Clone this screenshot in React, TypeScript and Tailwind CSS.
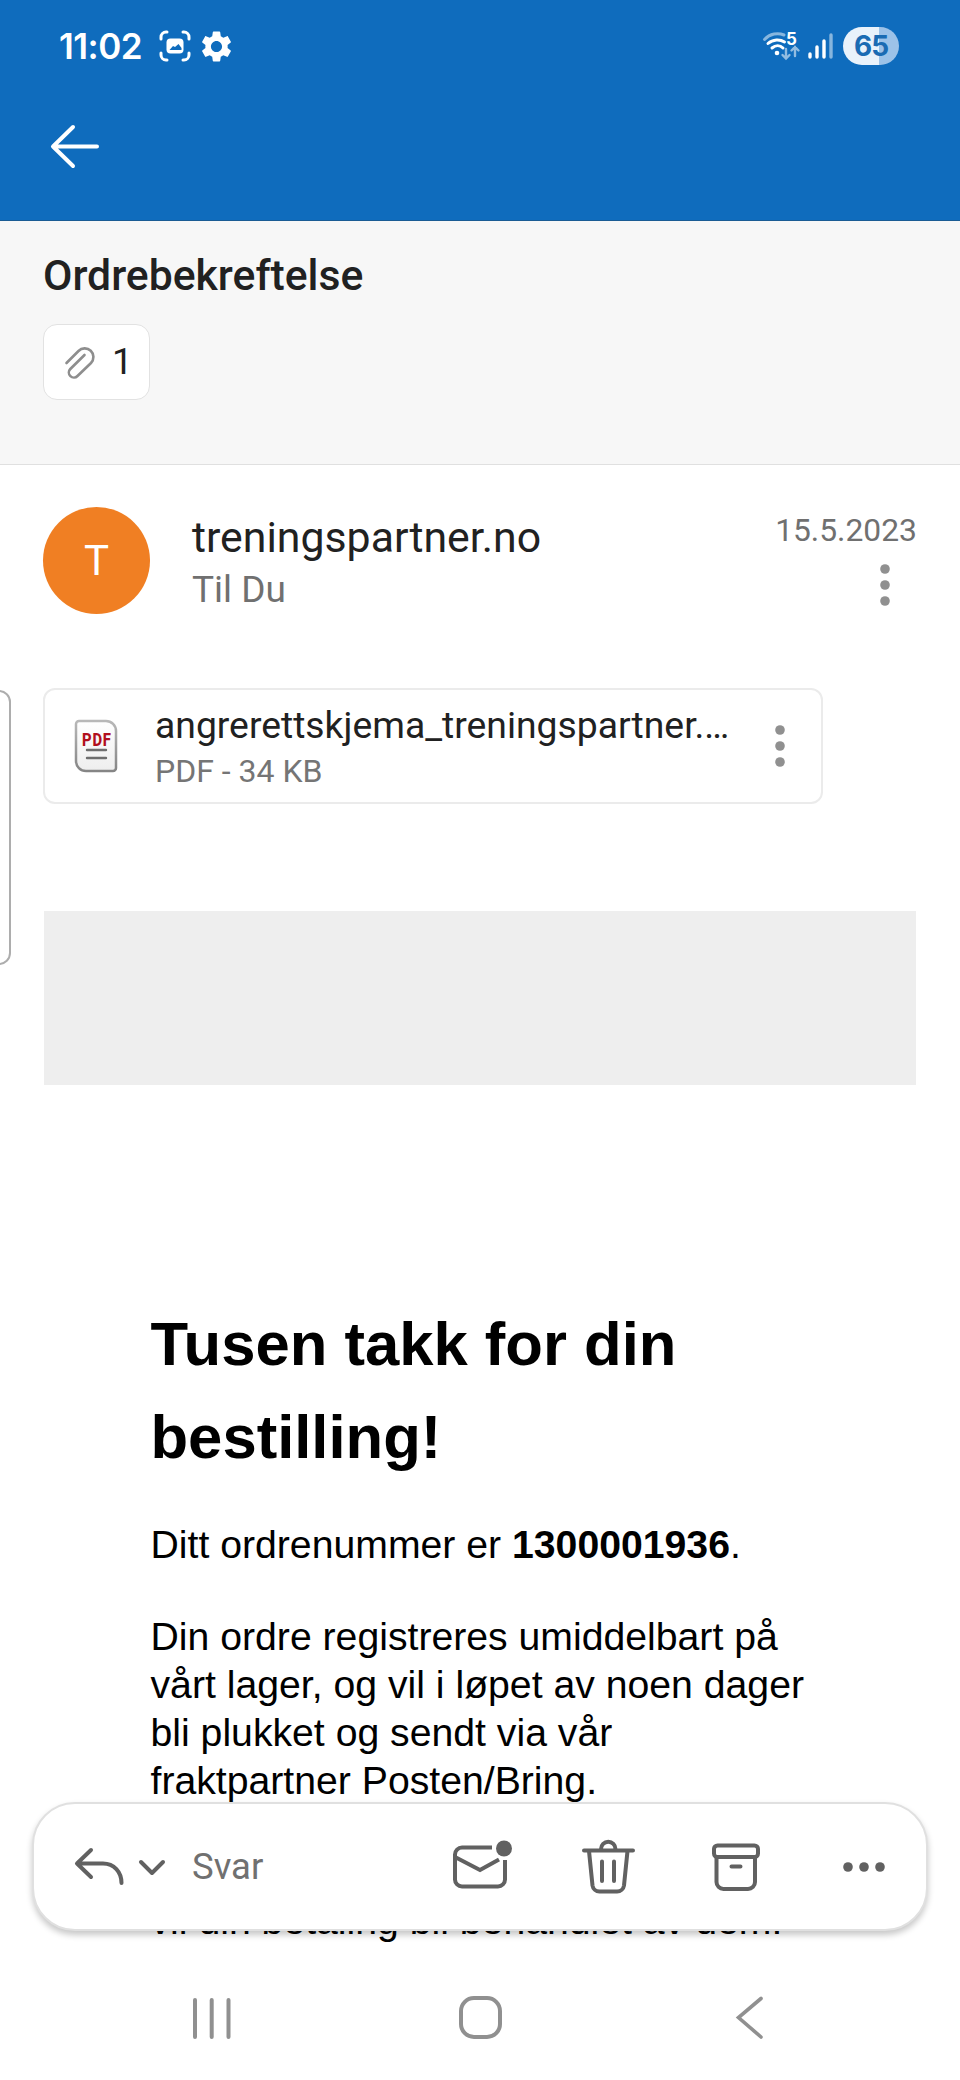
interface DotsProps {
    className?: string;
}

const VerticalDots = ({ className }: DotsProps) => (
    <svg className={className} width="12" height="44" viewBox="0 0 12 44" fill="#909090">
        <circle cx="6" cy="6" r="4.8" />
        <circle cx="6" cy="22" r="4.8" />
        <circle cx="6" cy="38" r="4.8" />
    </svg>
);

const StatusBar = () => (
    <div className="flex h-[92px] items-center justify-between pr-[61px] pl-[59px] text-white">
        <div className="flex items-center">
            <span className="w-[100px] font-['Inter'] text-[35px] leading-[40px] font-semibold tracking-[-0.5px]">11:02</span>
            {/* smart capture */}
            <svg width="32" height="32" viewBox="0 0 32 32" fill="none" stroke="currentColor" strokeWidth="3" strokeLinecap="round">
                <path d="M2 9V7a5 5 0 0 1 5-5h1M24 2h1a5 5 0 0 1 5 5v2M30 23v2a5 5 0 0 1-5 5h-1M8 30H7a5 5 0 0 1-5-5v-2" />
                <rect x="7.5" y="8.5" width="17" height="15" rx="4" fill="currentColor" stroke="none" />
                <path d="M10.500 20l3.500-4 2 1 3.500-3 3 4v2z" fill="#0f6cbd" stroke="none" />
            </svg>
            <svg className="ml-[10px]" width="31" height="31" viewBox="2 2 20 20" fill="currentColor">
                <path d="M19.140 12.940c.04-.3.060-.61.060-.94 0-.32-.02-.64-.07-.94l2.030-1.580c.18-.14.230-.41.120-.61l-1.920-3.320c-.12-.22-.37-.29-.59-.22l-2.390.96c-.5-.38-1.030-.7-1.620-.94l-.36-2.540c-.04-.24-.24-.41-.48-.41h-3.840c-.24 0-.43.17-.47.410l-.36 2.540c-.59.240-1.130.57-1.620.94l-2.390-.96c-.22-.08-.47 0-.59.220L2.740 8.870c-.12.210-.08.470.120.610l2.030 1.580c-.05.3-.09.630-.09.940s.02.640.070.940l-2.030 1.580c-.18.140-.23.410-.12.610l1.920 3.320c.12.220.370.290.590.220l2.390-.96c.5.380 1.030.7 1.620.940l.36 2.540c.05.240.240.410.480.410h3.840c.24 0 .44-.17.470-.41l.36-2.540c.59-.24 1.130-.56 1.620-.94l2.390.96c.22.080.470 0 .59-.22l1.920-3.320c.12-.22.070-.47-.12-.61l-2.010-1.580zM12 15.600c-1.980 0-3.600-1.620-3.600-3.600s1.620-3.600 3.600-3.600 3.600 1.620 3.600 3.600-1.620 3.600-3.600 3.600z" />
            </svg>
        </div>
        <div className="flex items-center">
            {/* wifi with band number and traffic arrows */}
            <div className="relative">
                <svg width="39" height="30" viewBox="0 0 39 30" fill="none" stroke="currentColor" strokeWidth="3" strokeLinecap="round">
                    <path d="M2.500 8.500C8 2.500 16 1.500 22 4" opacity=".5" />
                    <path d="M6 12.500c5-4.500 12-4.500 16.500-1.500M10 17c3.500-3 8-3 11 0" />
                    <circle cx="15" cy="22" r="2.300" fill="currentColor" stroke="none" />
                    <path d="M24 18v9m-3.500-3 3.500 3.500 3.500-3.500M33 25v-9m-3.500 3.500L33 16l3.500 3.500" strokeWidth="2.400" opacity=".55" />
                </svg>
                <span className="absolute top-0 left-[24px] font-['Inter'] text-[17px] leading-[17px] font-bold">5</span>
            </div>
            <svg className="ml-[7px]" width="25" height="28" viewBox="0 0 25 28" stroke="currentColor" strokeWidth="3.400" strokeLinecap="round">
                <path d="M2 25v-3M9 25V15M16 25V9" />
                <path d="M23 25V3" opacity=".5" />
            </svg>
            <div className="ml-[10px] flex h-[38px] w-[56px] items-center justify-center rounded-full bg-linear-to-r from-[#e9f2fb] from-64% to-[#9cc2e8] to-64%">
                <span className="font-['Inter'] text-[28px] leading-[38px] font-bold tracking-[-1px] text-[#1a6bb3]">65</span>
            </div>
        </div>
    </div>
);

const Header = () => (
    <header className="h-[221px] border-b border-[#1a5c94] bg-[#0f6cbd]">
        <StatusBar />
        <svg className="mt-[32px] ml-[50px]" width="50" height="46" viewBox="0 0 50 46" fill="none" stroke="#fff" strokeWidth="4" strokeLinecap="round" strokeLinejoin="round">
            <path d="M23 3 3 22.500 23 42M3.500 22.500h43.500" />
        </svg>
    </header>
);

const Subject = () => (
    <section className="h-[244px] border-b border-[#e0e0e0] bg-[#f7f7f7] pt-[27px] pl-[43px]">
        <h1 className="text-[42.7px] leading-[55px] font-medium text-[#212121]">Ordrebekreftelse</h1>
        <div className="mt-[21px] flex h-[76px] w-[107px] items-center rounded-[14px] border border-[#e2e2e2] bg-white pl-[20px]">
            <svg width="32" height="34" viewBox="0 0 32 34" fill="none" stroke="#8e8e8e" strokeWidth="2.600" strokeLinecap="round">
                <path d="M2.500 18 14.500 6a8.600 8.600 0 0 1 12.500 12L13.500 31a5 5 0 0 1-7.200-7L20.500 10" />
            </svg>
            <span className="ml-[16px] text-[37px] leading-[48px] text-[#212121]">1</span>
        </div>
    </section>
);

const Sender = () => (
    <section className="flex h-[223px] pt-[42px] pr-[43px] pl-[43px]">
        <div className="flex size-[107px] items-center justify-center rounded-full bg-[#f07f23] text-[42px] text-white">T</div>
        <div className="mt-[4px] ml-[42px] flex-1">
            <p className="text-[42.8px] leading-[52px] text-[#212121]">treningspartner.no</p>
            <p className="text-[37px] leading-[54px] text-[#707070]">Til Du</p>
        </div>
        <div className="mt-[3px] flex flex-col items-end">
            <p className="text-[31.8px] leading-[40px] text-[#707070]">15.5.2023</p>
            <VerticalDots className="mt-[13px] mr-[26px]" />
        </div>
    </section>
);

const Attachment = () => (
    <div className="ml-[43px] flex h-[116px] w-[780px] rounded-[12px] border-2 border-[#ebebeb] pl-[29px]">
        <div className="relative mt-[29px] h-[54px] w-[44px]">
            <svg width="44" height="54" viewBox="0 0 44 54" fill="none">
                <defs>
                    <linearGradient id="sheet" x1="0" y1="0" x2="0" y2="1">
                        <stop offset="0" stopColor="#fff" />
                        <stop offset="1" stopColor="#eee" />
                    </linearGradient>
                    <linearGradient id="edge" x1="0" y1="0" x2="0" y2="1">
                        <stop offset="0" stopColor="#b8b8b8" />
                        <stop offset="1" stopColor="#858585" />
                    </linearGradient>
                </defs>
                <path d="M5 2h27a10 10 0 0 1 10 10v37a3 3 0 0 1-3 3H12A10 10 0 0 1 2 42V5a3 3 0 0 1 3-3z" fill="url(#sheet)" stroke="url(#edge)" strokeWidth="2.500" />
                <path d="M13 31h19M13 39h19" stroke="#6e6e6e" strokeWidth="2.400" strokeLinecap="round" />
            </svg>
            <span className="absolute top-[11px] left-[8px] origin-left scale-x-[0.78] text-[19px] leading-[20px] font-extrabold tracking-[1px] text-[#b10e1c]">PDF</span>
        </div>
        <div className="mt-[11px] ml-[37px] w-[590px]">
            <p className="text-[37.3px] leading-[48px] whitespace-nowrap text-[#212121]">angrerettskjema_treningspartner.…</p>
            <p className="text-[32px] leading-[45px] text-[#757575]">PDF - 34 KB</p>
        </div>
        <VerticalDots className="mt-[34px] ml-[29px]" />
    </div>
);

const MailBody = () => (
    <article className="pr-[140px] pl-[150.5px] font-['Liberation_Sans',sans-serif] text-[39.2px] leading-[48px] text-black">
        <h2 className="mt-[213px] text-[61.6px] leading-[92.7px] font-bold">
            Tusen takk for din
            <br />
            bestilling!
        </h2>
        <p className="mt-[38px]">
            Ditt ordrenummer er <b>1300001936</b>.
        </p>
        <p className="mt-[44px] whitespace-nowrap">
            Din ordre registreres umiddelbart på
            <br />
            vårt lager, og vil i løpet av noen dager
            <br />
            bli plukket og sendt via vår
            <br />
            fraktpartner Posten/Bring.
        </p>
        <p className="mt-[92px] whitespace-nowrap">vil din betaling bli behandlet av dem.</p>
    </article>
);

const ActionBar = () => (
    <div className="absolute top-[1802px] left-[32px] flex h-[129px] w-[896px] items-center rounded-[43px] border-2 border-[#e0e0e0] bg-white pl-[40px] text-[#616161] shadow-[0_4px_6px_rgba(0,0,0,0.22)]">
        <svg width="50" height="40" viewBox="0 0 50 40" fill="none" stroke="currentColor" strokeWidth="4" strokeLinecap="round" strokeLinejoin="round">
            <path d="M17 3 3 16.500 17 30M3.500 16.500H29C40 16.500 47.500 25 47.500 36" />
        </svg>
        <svg className="ml-[13px]" width="30" height="20" viewBox="0 0 30 20" fill="none" stroke="currentColor" strokeWidth="4" strokeLinecap="round" strokeLinejoin="round">
            <path d="M4 5l11 11L26 5" />
        </svg>
        <span className="ml-[25px] w-[257px] text-[36.5px] leading-[48px] text-[#707070]">Svar</span>
        {/* mark unread */}
        <svg width="64" height="54" viewBox="0 0 64 54" fill="none" stroke="currentColor" strokeWidth="4">
            <path d="M43 7.500H13a7 7 0 0 0-7 7v25a7 7 0 0 0 7 7h36a7 7 0 0 0 7-7V20" />
            <path d="M6 17l25 13L50 19.500" />
            <circle cx="55" cy="8.500" r="8" fill="currentColor" stroke="none" />
        </svg>
        <svg className="ml-[69px]" width="54" height="56" viewBox="0 0 54 56" fill="none" stroke="currentColor" strokeWidth="4" strokeLinecap="round">
            <path d="M2 11.500h49M19 11.500V10a7 7 0 0 1 14.500 0v1.500M7 12l3.500 34.500a7 7 0 0 0 7 6h17.500a7 7 0 0 0 7-6L45.500 12M20 22.500v19.500M32 22.500v19.500" />
        </svg>
        <svg className="ml-[75px]" width="50" height="52" viewBox="0 0 50 52" fill="none" stroke="currentColor" strokeWidth="4" strokeLinecap="round">
            <rect x="3" y="4.500" width="44" height="11.500" rx="3.500" />
            <path d="M5.500 16v25a7 7 0 0 0 7 7H37a7 7 0 0 0 7-7V16M20.500 25.500h9" />
        </svg>
        <svg className="ml-[81px]" width="44" height="12" viewBox="0 0 44 12" fill="currentColor">
            <circle cx="6" cy="6" r="4.800" />
            <circle cx="22" cy="6" r="4.800" />
            <circle cx="38" cy="6" r="4.800" />
        </svg>
    </div>
);

const NavBar = () => (
    <nav className="absolute top-[1990px] left-0 flex h-[54px] w-full items-center pl-[187px] text-[#909090]">
        <svg width="50" height="46" viewBox="0 0 50 46" stroke="currentColor" strokeWidth="4" strokeLinecap="round">
            <path d="M8 6v37M24.700 6v37M41.500 6v37" />
        </svg>
        <svg className="ml-[222px]" width="43" height="46" viewBox="0 0 43 46" fill="none" stroke="currentColor" strokeWidth="4">
            <rect x="2" y="4" width="39" height="39" rx="13" />
        </svg>
        <svg className="ml-[227px]" width="40" height="46" viewBox="0 0 40 46" fill="none" stroke="currentColor" strokeWidth="3.600" strokeLinecap="round">
            <path d="M32 4.500 9.500 23.500 32 43" />
        </svg>
    </nav>
);

export default function App() {
    return (
        <div className="relative h-[2080px] w-[960px] overflow-hidden bg-white font-['Roboto',sans-serif]">
            <Header />
            <Subject />
            <Sender />
            <Attachment />
            <div className="mt-[107px] ml-[44px] h-[174px] w-[872px] bg-[#eeeeee]" />
            <MailBody />
            {/* edge panel handle */}
            <div className="absolute top-[690px] left-[-14px] h-[275px] w-[25px] rounded-[12px] border-2 border-[#adadad]" />
            <ActionBar />
            <NavBar />
        </div>
    );
}
